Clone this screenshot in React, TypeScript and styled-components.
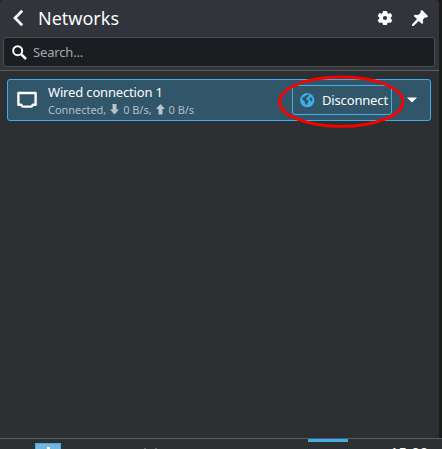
import React from "react";
import styled, { createGlobalStyle } from "styled-components";

const GlobalStyle = createGlobalStyle`
  * { box-sizing: border-box; }
  body { margin: 0; background: #1b1b1c; overflow: hidden; }
  svg { display: block; flex: none; }
`;

const Desktop = styled.main`
  width: 442px;
  height: 449px;
  display: flex;
  flex-direction: column;
  overflow: hidden;
  background: #1b1b1a;
  color: #fcfcfc;
  font-family: "Noto Sans", sans-serif;
  font-size: 13px;
  letter-spacing: -0.16px;
`;

const Popup = styled.section`
  width: 439px;
  height: 438px;
  display: flex;
  flex-direction: column;
  background: #2d3033;
  border-radius: 3px 4px 0 0;
`;

const Header = styled.header`
  height: 71px;
  flex: none;
  padding: 0 4px 0 3px;
  background: #31343a;
  border-bottom: 1px solid #5a5d60;
  border-radius: 3px 4px 0 0;
`;

const TitleBar = styled.div`
  height: 37px;
  display: flex;
  align-items: center;
  padding: 0 6px 1px 8px;
`;

const Title = styled.h1`
  flex: 1;
  margin: 0 0 0 11px;
  font-size: 18px;
  font-weight: 400;
  line-height: 24px;
  letter-spacing: 0;
`;

const Actions = styled.div`
  display: flex;
  align-items: center;
  gap: 18px;
`;

const SearchField = styled.label`
  height: 30px;
  display: flex;
  align-items: center;
  gap: 6px;
  padding: 0 8px;
  color: #a1a9b1;
  background: #1b1e20;
  border: 1px solid #494c4f;
  border-radius: 3px;
`;

const List = styled.div`
  padding: 8px 8px 0 7px;
`;

const ConnectionRow = styled.article`
  position: relative;
  height: 42px;
  display: flex;
  align-items: center;
  padding: 0 13px 0 9px;
  background: #31566a;
  border: 1px solid #3daee9;
  border-radius: 3px;
`;

const Details = styled.div`
  flex: 1;
  margin-left: 11px;
  padding-top: 1px;
  white-space: nowrap;
`;

const ConnectionName = styled.div`
  line-height: 18px;
`;

const Status = styled.div`
  display: flex;
  align-items: center;
  color: #b0bdc4;
  font-size: 11px;
  line-height: 17px;
  letter-spacing: -0.04px;
`;

const Rate = styled.span`
  display: flex;
  align-items: center;
  gap: 4px;
  margin-left: 4px;
`;

const DisconnectButton = styled.button`
  width: 100px;
  height: 30px;
  flex: none;
  display: flex;
  align-items: center;
  gap: 7px;
  padding: 0 0 0 7px;
  color: #fcfcfc;
  background: transparent;
  border: 1px solid #3daee9;
  border-radius: 3px;
  font: inherit;
  letter-spacing: inherit;
  white-space: nowrap;
`;

const ExpandButton = styled.button`
  display: flex;
  margin: 0 0 0 15px;
  padding: 0;
  color: inherit;
  background: none;
  border: 0;
`;

const Highlight = styled.svg`
  position: absolute;
  left: 269px;
  top: -6px;
  pointer-events: none;
`;

const Taskbar = styled.footer`
  height: 11px;
  display: flex;
  align-items: flex-start;
  overflow: hidden;
  background: #2d3033;
  border-top: 1px solid #5a5d60;
`;

const TaskIcon = styled.div`
  width: 26px;
  height: 8px;
  margin: 4px 0 0 35px;
  padding: 3px 0 0 8px;
  background: #73b7df;
  border: 1px solid #48abe0;
  border-bottom: 0;
`;

const TrayMarks = styled.div`
  display: flex;
  gap: 9px;
  margin: 9px 0 0 83px;
`;

const Mark = styled.i`
  width: 2px;
  height: 1px;
  background: #63676a;
`;

const ActiveIndicator = styled.div`
  width: 40px;
  height: 3px;
  margin-left: 151px;
  background: #3daee9;
`;

const Clock = styled.time`
  margin: 3px 0 0 42px;
  font-size: 15px;
  line-height: 20px;
  letter-spacing: 0;
`;

function BackIcon() {
  return <svg width="16" height="18" viewBox="0 0 16 18"><path d="M11.2 1.8 4 9l7.2 7.2" fill="none" stroke="#fcfcfc" strokeWidth="2.7" /></svg>;
}

function GearIcon() {
  return (
    <svg width="16" height="16" viewBox="0 0 16 16">
      <path fill="#fcfcfc" fillRule="evenodd" d="M6 1h4l.5 2 1.2.7 2-.6 1.6 2.8-1.5 1.5v1.3l1.5 1.5-1.6 2.7-2-.5-1.2.7L10 15H6l-.5-1.9-1.2-.7-2 .5-1.6-2.7 1.5-1.5V7.4L.7 5.9l1.6-2.8 2 .6L5.5 3zM8 5.9a2.1 2.1 0 1 0 0 4.2 2.1 2.1 0 0 0 0-4.2z" />
    </svg>
  );
}

function PinIcon() {
  return <svg width="18" height="18" viewBox="0 0 18 18"><path fill="#fcfcfc" d="m11 1 6 6-1 1.5-2.2-.1-2 2.5.4 3.2-1.2.9-3.1-3.1L2.5 17 1 17l.2-1.7L6 10 2.8 7l.8-1.2 3.4.3 2.5-2V2z" /></svg>;
}

function SearchIcon() {
  return <svg width="15" height="15" viewBox="0 0 15 15"><g fill="none" stroke="#fcfcfc" strokeWidth="2"><circle cx="5.7" cy="5.7" r="4.5" /><path d="m8.8 8.8 5.2 5.2" strokeWidth="2.5" /></g></svg>;
}

function WiredIcon() {
  return <svg width="20" height="18" viewBox="0 0 20 18"><path d="M1.4 2h17.2v11.8h-2.8l-1.3 1.8h-9l-1.3-1.8H1.4z" fill="none" stroke="#fcfcfc" strokeWidth="2.4" strokeLinejoin="round" /></svg>;
}

function TransferArrow({ up = false }: { up?: boolean }) {
  return <svg width="9" height="11" viewBox="0 0 9 11"><path fill="#b8c4ca" d={up ? "M4.5 0 9 5H6.5v5.5h-4V5H0z" : "M2.5 0h4v5.5H9l-4.5 5-4.5-5h2.5z"} /></svg>;
}

function GlobeIcon() {
  return (
    <svg width="15" height="15" viewBox="0 0 15 15">
      <circle cx="7.2" cy="7.2" r="7.1" fill="#3daee9" />
      <path fill="#31566a" d="m7.2 1.5 2.1.2-.8 1.5L6.6 4.9l-.4 1.3 1.4.9 1.2 1.3-.7 1.3-1.2 1-.3 1.8-1.7-2 .1-1.7-1.7-1.5-1.4-1.2L3 4.2l1.9-.6zM9.8 4.6l1.4-.4 1.3 2.8-.8 1.6-1.2-.6-.4-1.4-.9-.7z" />
    </svg>
  );
}

export default function App() {
  return (
    <Desktop>
      <GlobalStyle />
      <Popup>
        <Header>
          <TitleBar>
            <BackIcon />
            <Title>Networks</Title>
            <Actions><GearIcon /><PinIcon /></Actions>
          </TitleBar>
          <SearchField><SearchIcon />Search...</SearchField>
        </Header>
        <List>
          <ConnectionRow>
            <WiredIcon />
            <Details>
              <ConnectionName>Wired connection 1</ConnectionName>
              <Status>Connected,<Rate><TransferArrow />0 B/s,</Rate><Rate><TransferArrow up />0 B/s</Rate></Status>
            </Details>
            <DisconnectButton><GlobeIcon />Disconnect</DisconnectButton>
            <ExpandButton aria-label="Show details"><svg width="10" height="6" viewBox="0 0 10 6"><path fill="#fcfcfc" d="M0 .5h10L5 5.5z" /></svg></ExpandButton>
            <Highlight width="130" height="56" viewBox="0 0 130 56" aria-hidden="true"><ellipse cx="64.3" cy="27.7" rx="61.7" ry="24.7" fill="none" stroke="#fc0000" strokeWidth="2.9" /></Highlight>
          </ConnectionRow>
        </List>
      </Popup>
      <Taskbar>
        <TaskIcon><svg width="7" height="5" viewBox="0 0 7 5"><path fill="#f5fbff" d="M3 0h3v3h1v2H1V2h2z" /></svg></TaskIcon>
        <TrayMarks><Mark /><Mark /></TrayMarks>
        <ActiveIndicator />
        <Clock>15:00</Clock>
      </Taskbar>
    </Desktop>
  );
}
